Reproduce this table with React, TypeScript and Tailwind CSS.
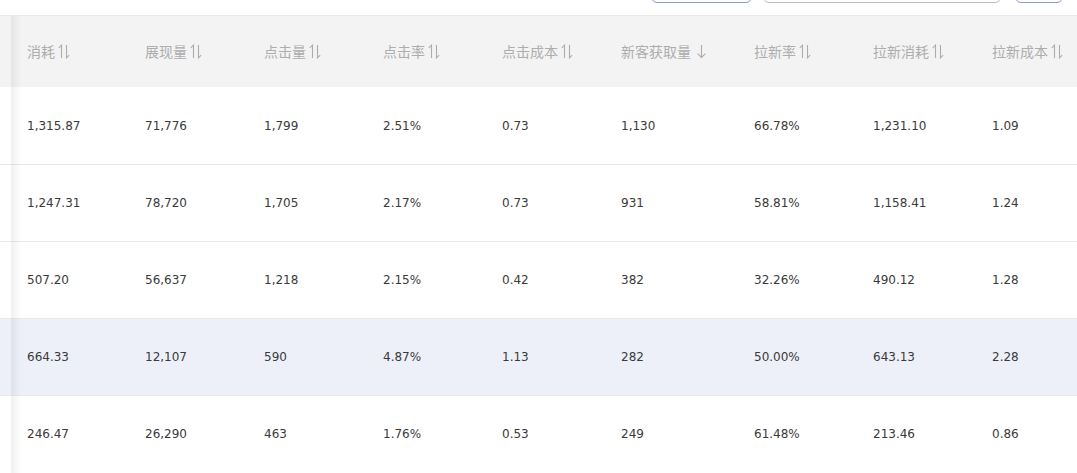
import React from 'react'

interface Column {
  title: string
  width: string
  sort: 'both' | 'desc'
}

const columns: Column[] = [
  { title: '消耗', width: 'w-[118px]', sort: 'both' },
  { title: '展现量', width: 'w-[119px]', sort: 'both' },
  { title: '点击量', width: 'w-[119px]', sort: 'both' },
  { title: '点击率', width: 'w-[119px]', sort: 'both' },
  { title: '点击成本', width: 'w-[119px]', sort: 'both' },
  { title: '新客获取量', width: 'w-[133px]', sort: 'desc' },
  { title: '拉新率', width: 'w-[119px]', sort: 'both' },
  { title: '拉新消耗', width: 'w-[119px]', sort: 'both' },
  { title: '拉新成本', width: 'w-[119px]', sort: 'both' },
]

const rows: string[][] = [
  ['1,315.87', '71,776', '1,799', '2.51%', '0.73', '1,130', '66.78%', '1,231.10', '1.09'],
  ['1,247.31', '78,720', '1,705', '2.17%', '0.73', '931', '58.81%', '1,158.41', '1.24'],
  ['507.20', '56,637', '1,218', '2.15%', '0.42', '382', '32.26%', '490.12', '1.28'],
  ['664.33', '12,107', '590', '4.87%', '1.13', '282', '50.00%', '643.13', '2.28'],
  ['246.47', '26,290', '463', '1.76%', '0.53', '249', '61.48%', '213.46', '0.86'],
]

// row index that is hovered in the screenshot
const activeRow = 3

function SortBoth() {
  return (
    <svg width="12" height="15" viewBox="0 0 12 15" fill="none" stroke="currentColor" strokeWidth="1.1" className="ml-[3px]">
      <path d="M3.5 14V1.2L0.8 3.9" />
      <path d="M8.5 1V13.8L11.2 11.1" />
    </svg>
  )
}

function SortDesc() {
  return (
    <svg width="11" height="15" viewBox="0 0 11 15" fill="none" stroke="currentColor" strokeWidth="1.1" className="ml-[5px]">
      <path d="M5.5 1V13.5" />
      <path d="M1.6 9.6L5.5 13.5L9.4 9.6" />
    </svg>
  )
}

export default function App() {
  return (
    <div className="relative w-[1077px] h-[473px] overflow-hidden bg-white font-['DejaVu_Sans',sans-serif]">
      {/* Toolbar (only the bottom edge of its buttons is visible) */}
      <div className="h-[15px] overflow-hidden">
        <div className="flex items-start -mt-[29px] pl-[651px]">
          <div className="w-[101px] h-[32px] rounded-[6px] border border-[#8d9acb]" />
          <div className="ml-[11px] w-[238px] h-[32px] rounded-[6px] border border-[#b9bcc4]" />
          <div className="ml-[14px] w-[48px] h-[32px] rounded-[6px] border border-[#8d9acb]" />
        </div>
      </div>

      {/* Header */}
      <div className="flex h-[72px] bg-[#f3f3f3] border-t border-[#ebebeb]">
        <div className="w-[12px] shrink-0" />
        {columns.map((c) => (
          <div key={c.title} className={`${c.width} shrink-0 pl-[15px] flex items-center text-[14px] text-[#adadad] font-['Noto_Sans_CJK_SC',sans-serif]`}>
            <span>{c.title}</span>
            {c.sort === 'both' ? <SortBoth /> : <SortDesc />}
          </div>
        ))}
      </div>

      {/* Body */}
      {rows.map((r, i) => (
        <div
          key={i}
          className={`flex h-[77px] ${i > 0 ? 'border-t border-[#e9e9e9]' : ''} ${i === activeRow ? 'bg-[#edf0f9]' : 'bg-white'}`}
        >
          <div className="w-[12px] shrink-0" />
          {r.map((v, j) => (
            <div key={j} className={`${columns[j].width} shrink-0 pl-[15px] flex items-center text-[12px] text-[#3a3a3a]`}>
              {v}
            </div>
          ))}
        </div>
      ))}

      {/* fixed-column shadow */}
      <div className="absolute left-[11px] top-[16px] bottom-0 w-[10px] bg-gradient-to-r from-black/[0.06] to-transparent" />
    </div>
  )
}
